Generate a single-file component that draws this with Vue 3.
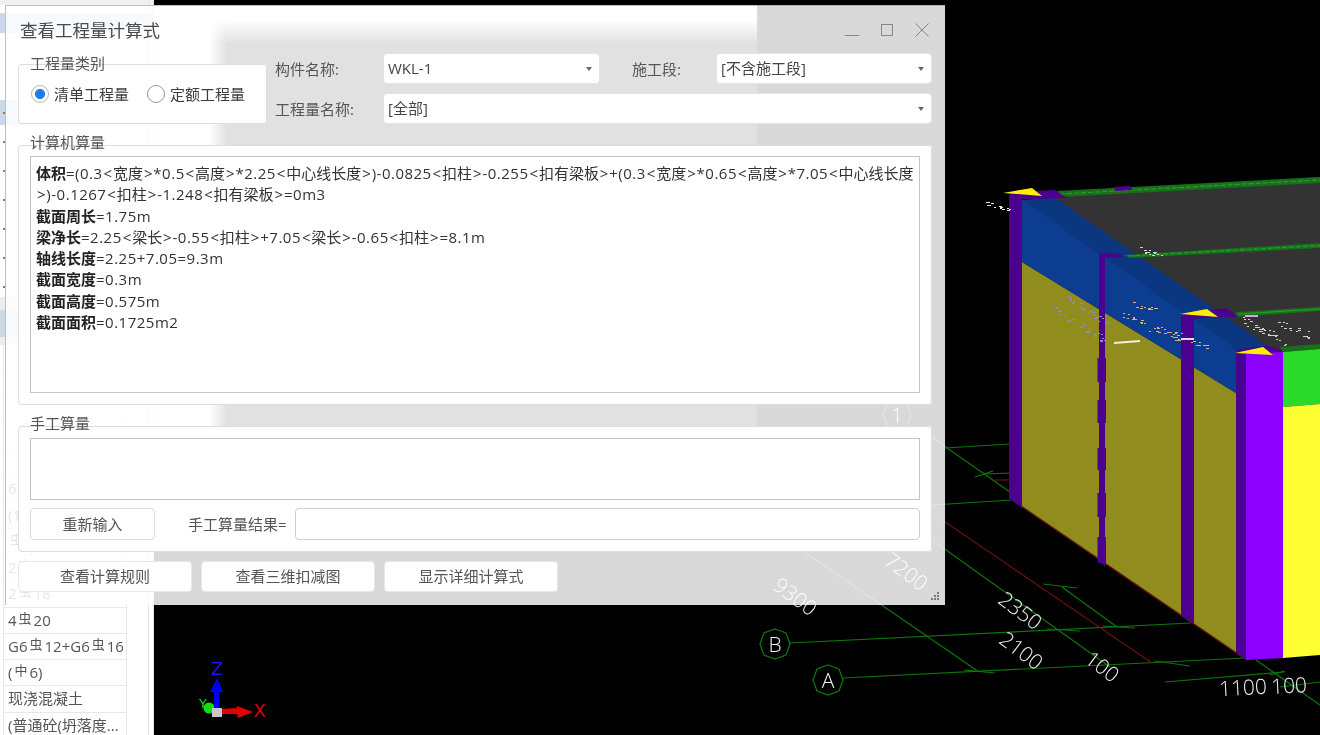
<script setup>
const rows = [
  [], [], [], [], [],
  ['6', '虫', '25'], ['(1', '虫', '6)'], ['', '虫', '18'], ['2', '虫', '25'], ['2', '虫', '18'],
  ['4', '虫', '20'], ['G6', '虫', '12+G6', '虫', '16'], ['(', '中', '6)'], ['现浇混凝土'], ['(普通砼(坍落度...']
]
const marks = ['#a5754a', '#a5754a', '#5a8ac0', '#a5754a', '#a5754a', '#a5754a', '#a5754a']
const formula = [
  ['体积', '=(0.3<宽度>*0.5<高度>*2.25<中心线长度>)-0.0825<扣柱>-0.255<扣有梁板>+(0.3<宽度>*0.65<高度>*7.05<中心线长度>)-0.1267<扣柱>-1.248<扣有梁板>=0m3'],
  ['截面周长', '=1.75m'],
  ['梁净长', '=2.25<梁长>-0.55<扣柱>+7.05<梁长>-0.65<扣柱>=8.1m'],
  ['轴线长度', '=2.25+7.05=9.3m'],
  ['截面宽度', '=0.3m'],
  ['截面高度', '=0.575m'],
  ['截面面积', '=0.1725m2']
]
const tokens = (s) => s.split(/([<>]|[\u4e00-\u9fff]+)/).filter(Boolean)
const tokenClass = (t) => (t === '<' || t === '>' ? 'br' : /[\u4e00-\u9fff]/.test(t) ? '' : 'asc')
const bulges = [[358, 24], [400, 23], [448, 22], [493, 24], [537, 26]]
const lines = [
  [930, 436, 1010, 492], [945, 448, 1010, 444], [975, 477, 993, 471], [985, 474, 1010, 473],
  [932, 505, 1012, 500], [932, 540, 1110, 667], [1043, 584, 1077, 588], [1062, 587, 1117, 627],
  [790, 643, 1191, 623], [843, 678, 1245, 658], [806, 553, 979, 672], [1165, 682, 1284, 672],
  [1256, 660, 1320, 705], [1280, 687, 1320, 682], [1047, 629, 1080, 631], [1103, 626, 1135, 628],
  [964, 670, 995, 673], [1155, 661, 1190, 666], [1270, 675, 1285, 671]
]
const dims = [
  ['2350', 1020, 611, 37], ['2100', 1021, 651, 37], ['100', 1102, 667, 37],
  ['9300', 795, 597, 37], ['7200', 906, 572, 37], ['1100', 1243, 688, -3], ['100', 1289, 686, -3]
]
let seed = 7
const rnd = () => {
  seed = (seed * 1103515245 + 12345) % 2147483648
  return seed / 2147483648
}
const bands = [
  ['#e8e8e8', 985, 203, 1010, 210, 2, 14],
  ['#d0d0d0', 1140, 249, 1163, 256, 3, 14],
  ['#8a8ad8', 1066, 297, 1110, 325, 3, 26],
  ['#8a8ad8', 1054, 309, 1104, 340, 4, 28],
  ['#e0b070', 1134, 303, 1155, 310, 3, 12],
  ['#e0b070', 1124, 317, 1180, 338, 5, 34],
  ['#e0b070', 1190, 342, 1212, 348, 2, 10],
  ['#d0d0d0', 1243, 320, 1292, 345, 5, 34],
  ['#d0d0d0', 1275, 322, 1310, 335, 4, 16]
]
const specks = []
for (const [c, x1, y1, x2, y2, j, n] of bands) {
  for (let i = 0; i < n; i++) {
    const t = rnd()
    specks.push({
      c,
      x: Math.round(x1 + (x2 - x1) * t + (rnd() - 0.5) * j),
      y: Math.round(y1 + (y2 - y1) * t + (rnd() - 0.5) * j * 2),
      w: rnd() > 0.6 ? 3 : 2
    })
  }
}
</script>

<template>
  <div class="page">
    <aside class="side">
      <div class="s-top"></div>
      <div class="s-blue first"></div>
      <div class="s-blue second"></div>
      <div class="s-head"><div class="s-headblue"></div></div>
      <div v-for="(r, i) in rows" :key="i" class="row">
        <span class="cell">
          <template v-for="(p, j) in r" :key="j">
            <span :class="{ rb: p === '虫' || p === '中' }">{{ p }}</span>
          </template>
        </span>
      </div>
      <div class="marks">
        <i v-for="(c, i) in marks" :key="i" class="mark" :style="{ background: c }"></i>
      </div>
      <div class="track"></div>
    </aside>

    <main class="view">
      <svg class="scene" viewBox="154 0 1166 735" width="1166" height="735">
        <g fill="none" stroke="#0c760c" stroke-width="1.2">
          <line v-for="(l, i) in lines" :key="i" :x1="l[0]" :y1="l[1]" :x2="l[2]" :y2="l[3]" />
        </g>
        <g fill="none" stroke="#6b0f0f" stroke-width="1.2">
          <line x1="932" y1="513" x2="1152" y2="663" />
          <line x1="995" y1="480" x2="1010" y2="480" />
          <line x1="1012" y1="500" x2="1245" y2="659" />
        </g>
        <g fill="none" stroke="#0c760c" stroke-width="1.3">
          <polygon points="775,629 786,633 790,644 786,655 775,659 764,655 760,644 764,633" />
          <polygon points="828,665 839,669 843,680 839,691 828,695 817,691 813,680 817,669" />
          <polygon points="897,401 907,405 911,415 907,425 897,429 887,425 883,415 887,405" />
        </g>
        <g class="dim">
          <text x="775" y="651.5" text-anchor="middle">B</text>
          <text x="828" y="687.5" text-anchor="middle">A</text>
          <text x="897" y="422.5" text-anchor="middle">1</text>
          <text v-for="d in dims" :key="d[0] + d[1]" text-anchor="middle" :transform="`translate(${d[1]} ${d[2]}) rotate(${d[3]})`" y="7">{{ d[0] }}</text>
        </g>

        <polygon points="1052,197 1320,177 1320,349 1283,352 1273,350" fill="#333333" />
        <polygon points="1022,262 1236,393 1236,652 1022,506" fill="#918c1e" />
        <polygon points="1022,200 1055,198 1273,350 1236,393 1022,262" fill="#0c3d90" />
        <polygon points="1022,200 1055,198 1273,350 1240,352" fill="#0a3780" />

        <polygon points="1057,191 1320,177 1320,183 1060,197" fill="#17701a" />
        <polyline points="1060,194 1320,180" fill="none" stroke="#2b9a2b" stroke-width="1.2" stroke-dasharray="5 2" />
        <polygon points="1113,187 1130,186 1133,190 1116,191" fill="#4b0090" />
        <polygon points="1123,255 1320,243 1320,248 1130,258" fill="#17701a" />
        <polyline points="1128,256 1320,245.5" fill="none" stroke="#2b9a2b" stroke-width="1.2" stroke-dasharray="5 2" />
        <polygon points="1235,312 1320,307 1320,311 1238,317" fill="#17701a" />
        <polyline points="1238,314 1320,309" fill="none" stroke="#2b9a2b" stroke-width="1.2" />
        <polygon points="1280,347 1320,344 1320,349 1283,352" fill="#17701a" />

        <polygon points="1009,195 1022,195 1022,508 1009,498" fill="#4b0090" />
        <polygon points="1099,253 1105,253 1105,566 1099,562" fill="#4b0090" />
        <polygon points="1099,253 1122,254 1122,257 1099,258" fill="#4b0090" />
        <rect v-for="b in bulges" :key="b[0]" x="1097.5" :y="b[0]" width="8.5" :height="b[1]" fill="#4b0090" />
        <polygon points="1181,315 1194,315 1194,624 1181,615" fill="#4b0090" />
        <polygon points="1236,352 1246,352 1246,660 1236,652" fill="#4b0090" />
        <polygon points="1246,352 1283,352 1283,658 1246,660" fill="#8b00ff" />
        <polygon points="1283,352 1320,349 1320,404 1283,407" fill="#2bd92b" />
        <polygon points="1283,407 1320,404 1320,655 1283,658" fill="#ffff33" />

        <polygon points="1010,193 1037,191 1055,190 1067,198 1010,200" fill="#4b0090" />
        <polygon points="1181,314 1227,308 1238,317 1181,319" fill="#4b0090" />
        <polygon points="1236,350 1262,346 1275,347 1283,352 1236,354" fill="#4b0090" />
        <polygon points="1003,193 1032,188 1042,196" fill="#ffee00" />
        <polygon points="1180,314 1207,309 1218,317" fill="#ffee00" />
        <polygon points="1235,353 1263,347 1273,355" fill="#ffee00" />

        <rect v-for="(s, i) in specks" :key="i" :x="s.x" :y="s.y" :width="s.w" height="1" :fill="s.c" />
        <line x1="1114" y1="343" x2="1140" y2="341" stroke="#f0f0e0" stroke-width="2" />
        <line x1="1181" y1="339" x2="1194" y2="339" stroke="#e8d8f0" stroke-width="2" />
        <line x1="1245" y1="316" x2="1258" y2="316" stroke="#e0a0e0" stroke-width="2" />

        <text x="217" y="675" class="axis" fill="#1414ff" text-anchor="middle">Z</text>
        <text x="260" y="717" class="axis" fill="#e00000" text-anchor="middle">X</text>
        <text x="203" y="708" class="axis small" fill="#10e010" text-anchor="middle">Y</text>
        <circle cx="209" cy="708" r="5.5" fill="#10e010" />
        <polygon points="217,678 210,692 214,692 214,708 219,708 219,692 223,692" fill="#0000f0" />
        <polygon points="222,709 237,708 237,706 253,712 238,718 237,714 222,714" fill="#e00000" />
        <rect x="212" y="708" width="10" height="9" fill="#c8c8c8" />
      </svg>
    </main>

    <div class="underlay"></div>

    <section class="dialog">
      <header class="titlebar">
        <span class="title">查看工程量计算式</span>
        <div class="winbtns">
          <svg width="14" height="14" viewBox="0 0 14 14"><path d="M0 12.5H14" stroke="#888" fill="none" /></svg>
          <svg width="14" height="14" viewBox="0 0 14 14"><rect x="1.5" y="1.5" width="11" height="11" stroke="#888" fill="none" /></svg>
          <svg width="14" height="14" viewBox="0 0 14 14"><path d="M0.5 0.5L13.5 13.5M13.5 0.5L0.5 13.5" stroke="#888" fill="none" /></svg>
        </div>
      </header>

      <div class="toprow">
        <fieldset class="group type">
          <span class="legend">工程量类别</span>
          <div class="radios">
            <label class="radio"><i class="dot on"></i>清单工程量</label>
            <label class="radio"><i class="dot"></i>定额工程量</label>
          </div>
        </fieldset>
        <div class="fields">
          <div class="fieldrow">
            <span class="lbl w108">构件名称:</span>
            <div class="combo c1"><span>WKL-1</span><i class="arrow"></i></div>
            <span class="lbl w84">施工段:</span>
            <div class="combo c2"><span>[不含施工段]</span><i class="arrow"></i></div>
          </div>
          <div class="fieldrow">
            <span class="lbl w108">工程量名称:</span>
            <div class="combo grow"><span>[全部]</span><i class="arrow"></i></div>
          </div>
        </div>
      </div>

      <fieldset class="group calc">
        <span class="legend up">计算机算量</span>
        <div class="textbox formula">
          <p v-for="f in formula" :key="f[0]"><b>{{ f[0] }}</b><template v-for="(t, i) in tokens(f[1])" :key="i"><span :class="tokenClass(t)">{{ t }}</span></template></p>
        </div>
      </fieldset>

      <fieldset class="group manual">
        <span class="legend up">手工算量</span>
        <div class="textbox manualbox"></div>
        <div class="manualrow">
          <button class="btn reinput">重新输入</button>
          <span class="result">手工算量结果=</span>
          <div class="input"></div>
        </div>
      </fieldset>

      <div class="actions">
        <button class="btn action">查看计算规则</button>
        <button class="btn action">查看三维扣减图</button>
        <button class="btn action">显示详细计算式</button>
      </div>

      <svg class="grip" width="10" height="10" viewBox="0 0 10 10" fill="#777">
        <rect x="7" y="1" width="2" height="2" /><rect x="4" y="4" width="2" height="2" /><rect x="7" y="4" width="2" height="2" />
        <rect x="1" y="7" width="2" height="2" /><rect x="4" y="7" width="2" height="2" /><rect x="7" y="7" width="2" height="2" />
      </svg>
    </section>
  </div>
</template>

<style scoped>
.page {
  position: relative;
  width: 1320px;
  height: 735px;
  overflow: hidden;
  display: flex;
  background: #000;
  font-family: "Open Sans", "Noto Sans CJK SC", sans-serif;
  color: #444;
  filter: blur(0.35px);
}
.side {
  position: relative;
  width: 154px;
  flex: none;
  height: 735px;
  background: #fff;
  border-right: 1px solid #e4e4e4;
  box-sizing: border-box;
  overflow: hidden;
}
.s-top { height: 5px; background: #f0f0f0; }
.s-blue { background: #cbd9ea; width: 100%; }
.s-blue.first { height: 20px; margin-top: 8px; }
.s-blue.second { height: 25px; margin-top: 67px; }
.s-head { height: 48px; margin-top: 172px; background: #ececec; padding-top: 13px; box-sizing: border-box; }
.s-headblue { height: 27px; background: #cdd8e6; }
.row {
  height: 26.25px;
  width: 124px;
  box-sizing: border-box;
  border-bottom: 1px solid #e8e8e8;
  border-right: 1px solid #e8e8e8;
  border-left: 1px solid #e8e8e8;
  margin-left: 3px;
  white-space: nowrap;
  overflow: hidden;
}
.cell { display: block; height: 25px; padding-left: 4px; font-size: 15px; line-height: 25px; color: #555; }
.rb { position: relative; top: -3px; font-size: 13px; margin: 0 2px; font-family: "Noto Sans CJK SC", sans-serif; }
.marks { position: absolute; left: 3px; top: 112px; display: flex; flex-direction: column; gap: 27px; }
.mark { display: block; width: 2px; height: 2px; }
.track { position: absolute; left: 148px; top: 0; bottom: 0; width: 1px; background: #e2e2e2; }

.view { flex: 1; min-width: 0; }
.scene { display: block; }

.underlay {
  position: absolute;
  left: 154px;
  top: 5px;
  width: 603px;
  height: 480px;
  background:
    linear-gradient(to right, #fff 9%, rgba(255, 255, 255, 0) 12%),
    linear-gradient(to bottom, #fff 3%, rgba(255, 255, 255, 0) 8%),
    #3a3a3a;
}

.dialog {
  position: absolute;
  left: 5px;
  top: 5px;
  width: 940px;
  height: 600px;
  box-sizing: border-box;
  border: 1px solid rgba(150, 150, 150, 0.6);
  border-right: 0;
  border-bottom: 0;
  padding: 0 13px 0 12px;
  background: rgba(255, 255, 255, 0.85);
  display: flex;
  flex-direction: column;
}
.titlebar { height: 47px; flex: none; display: flex; justify-content: space-between; position: relative; }
.title { font-size: 17.5px; line-height: 24px; margin-top: 12px; margin-left: 2px; color: #4a4a4a; }
.winbtns { display: flex; gap: 21px; margin-top: 17px; margin-right: 3px; height: 14px; }

.toprow { display: flex; gap: 8px; flex: none; }
.group {
  position: relative;
  margin: 0;
  padding: 0;
  background: #fff;
  border: 1px solid #dcdcdc;
  border-radius: 4px;
  box-sizing: border-box;
  min-width: 0;
}
.legend {
  position: absolute;
  left: 11px;
  top: -11px;
  font-size: 15px;
  line-height: 18px;
  color: #555;
}
.legend.up { top: -13px; }
.type { width: 249px; height: 60px; margin-top: 11px; }
.radios { display: flex; gap: 18px; margin: 18px 0 0 12px; }
.radio { display: flex; align-items: center; gap: 5px; font-size: 15px; line-height: 22px; color: #3c3c3c; }
.dot {
  display: block;
  width: 18px;
  height: 18px;
  box-sizing: border-box;
  border-radius: 50%;
  border: 1.5px solid #9a9a9a;
  background: #fff;
}
.dot.on { background: radial-gradient(circle, #1f7be8 0 4.6px, #fff 5.4px); border-color: #b8b8b8; }
.fields { flex: 1; display: flex; flex-direction: column; gap: 9px; }
.fieldrow { display: flex; align-items: center; height: 31px; }
.lbl { flex: none; font-size: 15px; color: #555; white-space: nowrap; }
.w108 { width: 108px; }
.w84 { width: 84px; }
.combo {
  position: relative;
  height: 31px;
  box-sizing: border-box;
  background: #fff;
  border-radius: 4px;
  border: 1px solid #e4e4e4;
  padding-left: 4px;
  font-size: 15px;
  line-height: 29px;
  color: #444;
}
.c1 { width: 217px; margin-right: 32px; }
.c2 { width: 216px; }
.grow { flex: 1; }
.arrow {
  position: absolute;
  right: 7px;
  top: 13px;
  width: 0;
  height: 0;
  border-left: 3px solid transparent;
  border-right: 3px solid transparent;
  border-top: 4px solid #666;
}

.calc { height: 260px; margin-top: 21px; padding: 10px 11px 0; flex: none; }
.textbox { box-sizing: border-box; width: 890px; background: #fff; border: 1px solid #c4c4c4; }
.formula { height: 237px; padding: 6px 5px; font-size: 15px; line-height: 21.3px; color: #333; word-break: break-all; }
.formula p { margin: 0; }
.formula b { font-weight: 700; color: #222; }
.asc { letter-spacing: 0.5px; }
.br { margin: 0 0.9px; }
.manual { height: 126px; margin-top: 21px; padding: 11px 11px 0; flex: none; }
.manualbox { height: 62px; }
.manualrow { display: flex; align-items: center; margin-top: 8px; }
.btn {
  box-sizing: border-box;
  font-family: inherit;
  background: #fff;
  border: 1px solid #dcdcdc;
  border-radius: 4px;
  color: #555;
  font-size: 15px;
  padding: 0 0 2px;
}
.reinput { width: 125px; height: 32px; }
.result { font-size: 15px; color: #555; margin: 0 0 2px 33px; width: 107px; white-space: nowrap; }
.input { width: 625px; height: 32px; box-sizing: border-box; background: #fff; border: 1px solid #d0d0d0; border-radius: 4px; }
.actions { display: flex; gap: 9px; margin-top: 9px; flex: none; }
.action { width: 174px; height: 31px; border-color: #e8e8e8; }
.grip { position: absolute; right: 5px; bottom: 4px; }
</style>

<style>
.dim text {
  font-family: "Open Sans", "Noto Sans", sans-serif;
  font-size: 21px;
  font-weight: 300;
  fill: #f2f2f2;
}
.axis { font-family: "DejaVu Sans", sans-serif; font-size: 18px; font-weight: 400; }
.axis.small { font-size: 13px; }
</style>
